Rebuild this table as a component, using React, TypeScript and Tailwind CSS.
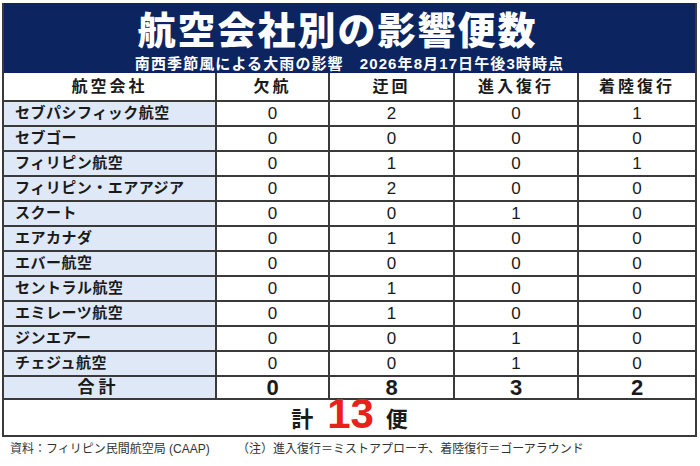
const rows: [string, number, number, number, number][] = [
  ["セブパシフィック航空", 0, 2, 0, 1],
  ["セブゴー", 0, 0, 0, 0],
  ["フィリピン航空", 0, 1, 0, 1],
  ["フィリピン・エアアジア", 0, 2, 0, 0],
  ["スクート", 0, 0, 1, 0],
  ["エアカナダ", 0, 1, 0, 0],
  ["エバー航空", 0, 0, 0, 0],
  ["セントラル航空", 0, 1, 0, 0],
  ["エミレーツ航空", 0, 1, 0, 0],
  ["ジンエアー", 0, 0, 1, 0],
  ["チェジュ航空", 0, 0, 1, 0],
]

const headers = ["欠航", "迂回", "進入復行", "着陸復行"]
const totals = [0, 8, 3, 2]

const font = { fontFamily: '"Liberation Sans", "Noto Sans CJK JP", sans-serif' }

const App = () => {
  return (
    <div
      className="w-[700px] h-[466px] bg-white pt-[3px] pl-[2px] text-[#1a1a1a] overflow-hidden"
      style={font}
    >
      <div className="w-[695px] border-2 border-[#3a3a3a]">
        {/* title band */}
        <div className="h-[70px] -mt-[2px] bg-[#0c2560] flex flex-col items-center text-white">
          <h1 className="mt-[8px] mr-[24px] text-[38px] leading-[40px] font-black tracking-[2px]">
            航空会社別の影響便数
          </h1>
          <p className="mt-[4px] text-[15px] leading-[18px] font-bold tracking-[1.1px]">
            南西季節風による大雨の影響　2026年8月17日午後3時時点
          </p>
        </div>

        <div className="grid grid-cols-[211px_111px_123px_122px_1fr] grid-rows-[27px_repeat(11,23px)_21px_35px] gap-[2px] bg-[#3a3a3a]">
          <div className="bg-white flex items-center justify-center text-[16px] font-bold tracking-[3px]">
            航空会社
          </div>
          {headers.map((h) => (
            <div key={h} className="bg-white flex items-center justify-center text-[16px] font-bold tracking-[3px]">
              {h}
            </div>
          ))}

          {rows.map(([name, ...vals]) => (
            <>
              <div key={name} className="bg-[#dfe8f6] flex items-center pl-[11px] text-[15px] font-bold tracking-[0.5px]">
                {name}
              </div>
              {vals.map((v, i) => (
                <div key={name + i} className="bg-white flex items-center justify-center text-[17px]">
                  {v}
                </div>
              ))}
            </>
          ))}

          <div className="bg-[#dfe8f6] flex items-center justify-center pr-[22px] text-[17px] font-bold tracking-[4px]">
            合計
          </div>
          {totals.map((t, i) => (
            <div key={i} className="bg-white flex items-center justify-center text-[22px] font-bold">
              {t}
            </div>
          ))}

          <div className="col-span-5 bg-white flex items-end justify-center pb-[2px]">
            <span className="text-[22px] leading-[26px] font-bold">計</span>
            <span className="ml-[14px] text-[42px] leading-[38px] font-bold text-[#e8211b]">13</span>
            <span className="ml-[12px] text-[22px] leading-[26px] font-bold">便</span>
          </div>
        </div>
      </div>

      <div className="mt-[4px] flex pl-[8px] text-[12px] leading-[16px] text-[#333]">
        <span className="w-[227px]">資料：フィリピン民間航空局 (CAAP)</span>
        <span>（注）進入復行＝ミストアプローチ、着陸復行＝ゴーアラウンド</span>
      </div>
    </div>
  )
}

export default App
